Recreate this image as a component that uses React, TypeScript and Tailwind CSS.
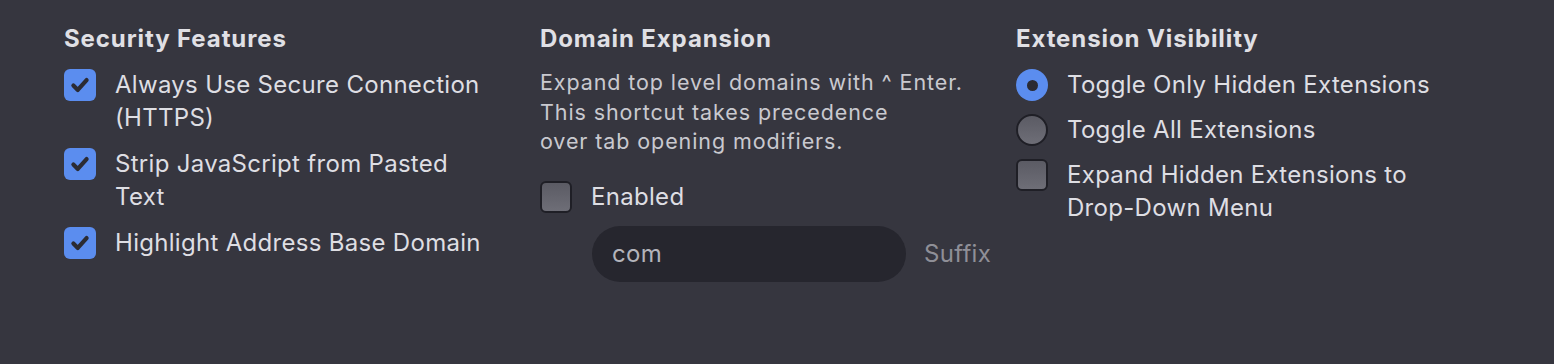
import React from 'react';

const font = { fontFamily: 'Inter, "Noto Sans", sans-serif' };

function CheckBox({ checked }: { checked?: boolean }) {
  if (checked) {
    return (
      <div className="w-8 h-8 shrink-0 rounded-[6px] bg-[#5b8def] flex items-center justify-center">
        <svg width="22" height="22" viewBox="0 0 20 20">
          <path d="M4 10.5 L8 14.5 L16 5.5" fill="none" stroke="#2b2b33" strokeWidth="3.8" strokeLinecap="round" strokeLinejoin="round" />
        </svg>
      </div>
    );
  }
  return (
    <div className="w-8 h-8 shrink-0 rounded-[6px] border-2 border-[#1f1f26] bg-gradient-to-b from-[#5b5b64] to-[#6e6e77]" />
  );
}

function Radio({ checked }: { checked?: boolean }) {
  if (checked) {
    return (
      <div className="w-8 h-8 shrink-0 rounded-full bg-[#5b8def] flex items-center justify-center">
        <div className="w-[11px] h-[11px] rounded-full bg-[#2b2b33]" />
      </div>
    );
  }
  return (
    <div className="w-8 h-8 shrink-0 rounded-full border-2 border-[#1f1f26] bg-gradient-to-b from-[#5b5b64] to-[#6e6e77]" />
  );
}

function Row({ control, label }: { control: React.ReactNode; label: React.ReactNode }) {
  return (
    <div className="flex items-start gap-[19px]">
      <div className="pt-[1px]">{control}</div>
      <div className="max-w-[380px] text-[24px] leading-[33px] tracking-[0.3px] text-[#dedee3]">{label}</div>
    </div>
  );
}

export default function App() {
  return (
    <div className="w-[1554px] h-[364px] bg-[#36363f] pl-16 pt-[22px]" style={font}>
      <div className="grid grid-cols-[476px_476px_476px]">
        <div>
          <h3 className="text-[24px] leading-[33px] font-bold tracking-[0.9px] text-[#e0e0e5]">Security Features</h3>
          <div className="mt-[13px] flex flex-col gap-[13px]">
            <Row control={<CheckBox checked />} label="Always Use Secure Connection (HTTPS)" />
            <Row control={<CheckBox checked />} label="Strip JavaScript from Pasted Text" />
            <Row control={<CheckBox checked />} label="Highlight Address Base Domain" />
          </div>
        </div>

        <div>
          <h3 className="text-[24px] leading-[33px] font-bold tracking-[0.9px] text-[#e0e0e5]">Domain Expansion</h3>
          <p className="mt-[13px] text-[21.5px] leading-[29.5px] tracking-[0.9px] text-[#c9c9cf]">
            Expand top level domains with ^ Enter.<br />
            This shortcut takes precedence<br />
            over tab opening modifiers.
          </p>
          <div className="mt-[23px]">
            <Row control={<CheckBox />} label="Enabled" />
          </div>
          <div className="mt-[13px] ml-[52px] flex items-center gap-[18px]">
            <div className="w-[314px] h-14 rounded-full bg-[#26262e] flex items-center px-5 text-[24px] tracking-[0.3px] text-[#b4b4bb]">
              com
            </div>
            <span className="text-[24px] tracking-[0.3px] text-[#8f8f97]">Suffix</span>
          </div>
        </div>

        <div>
          <h3 className="text-[24px] leading-[33px] font-bold tracking-[0.9px] text-[#e0e0e5]">Extension Visibility</h3>
          <div className="mt-[13px] flex flex-col gap-[12px]">
            <Row control={<Radio checked />} label="Toggle Only Hidden Extensions" />
            <Row control={<Radio />} label="Toggle All Extensions" />
            <Row control={<CheckBox />} label="Expand Hidden Extensions to Drop-Down Menu" />
          </div>
        </div>
      </div>
    </div>
  );
}
